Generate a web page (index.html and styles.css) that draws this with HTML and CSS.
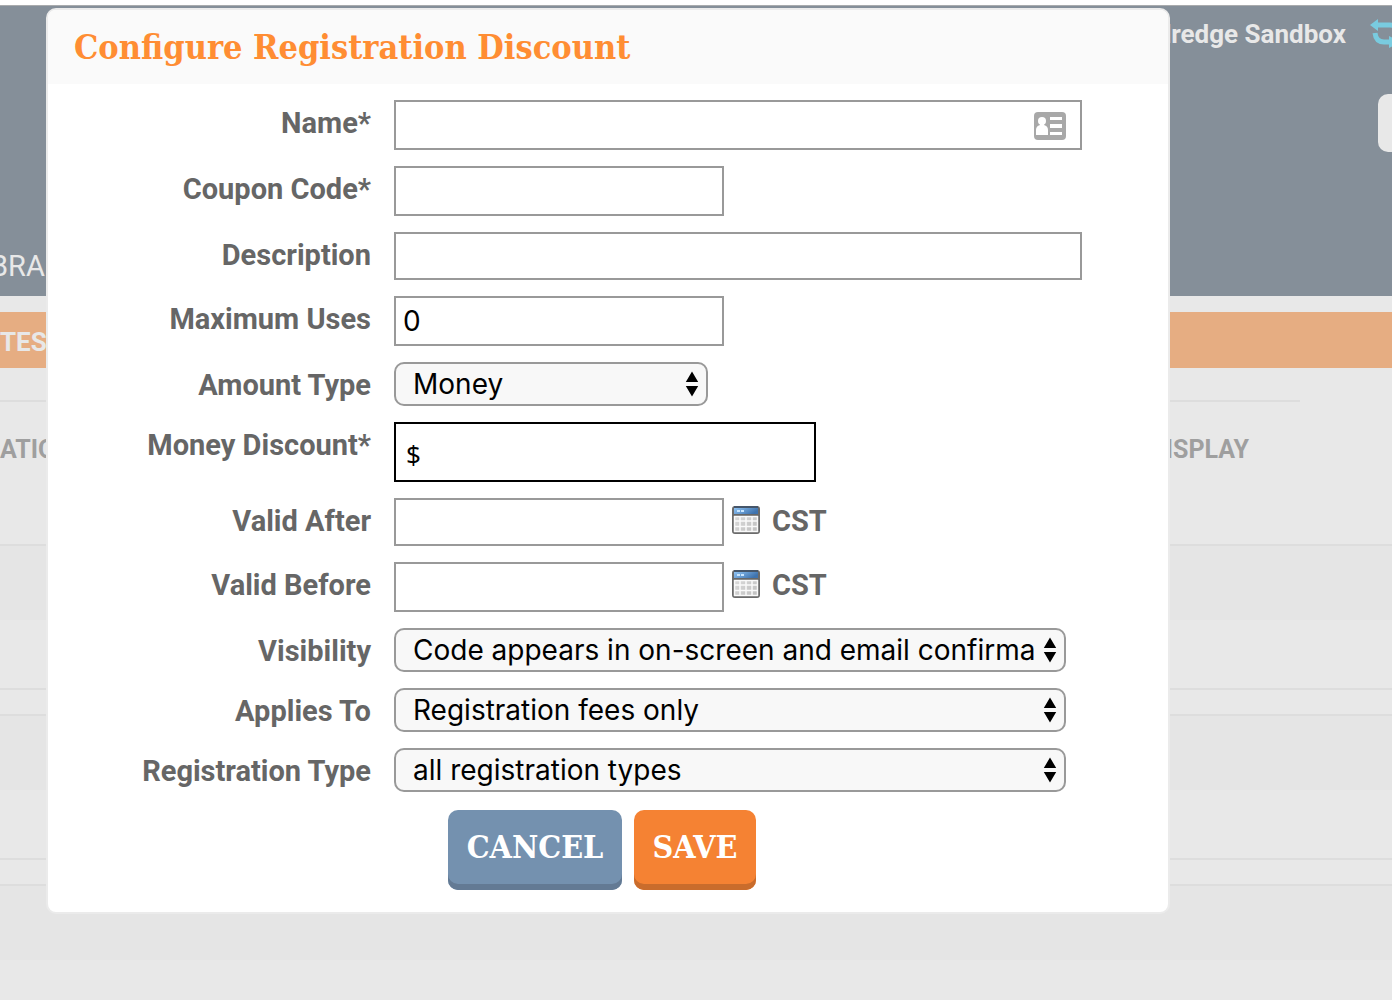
FILE: index.html
```html
<!DOCTYPE html>
<html lang="en">
<head>
<meta charset="utf-8">
<title>Configure Registration Discount</title>
<link rel="stylesheet" href="styles.css">
</head>
<body>
<svg class="defs" aria-hidden="true">
  <defs>
    <linearGradient id="cal-top" x1="0" x2="1" y1="0" y2="0.4">
      <stop offset="0" stop-color="#8fc4f5"/><stop offset="1" stop-color="#3f73ae"/>
    </linearGradient>
    <linearGradient id="cal-body" x1="0" x2="1" y1="0" y2="1">
      <stop offset="0" stop-color="#e2e2e2"/><stop offset="1" stop-color="#bdbdbd"/>
    </linearGradient>
    <symbol id="calendar" viewBox="0 0 28 28">
      <rect x="1" y="1" width="26" height="26" rx="2" fill="url(#cal-body)" stroke="#6b6b6b" stroke-width="2"/>
      <path d="M2 2h24v6H2z" fill="url(#cal-top)"/>
      <path d="M2 1h24" stroke="#46566a" stroke-width="2"/>
      <path d="M2 9h24" stroke="#686868" stroke-width="2"/>
      <path d="M5 4h3v2H5zM9 4h3v2H9z" fill="#c9e6ff"/>
      <path d="M2 10.5h24M2 15h24M2 20.5h24M2 25.5h24M2.5 10v16M8 10v16M14 10v16M20 10v16M25.500 10v16" stroke="#fff" stroke-width="1.500" opacity="0.9"/>
    </symbol>
    <symbol id="arrows" viewBox="0 0 14 26">
      <path d="M7 0.5L13.2 11H0.8zM7 25.5L13.2 15H0.8z" fill="#000"/>
    </symbol>
  </defs>
</svg>

<div class="page">
  <header class="site-header">
    <div class="account">
      <span class="account-name">dredge Sandbox</span>
      <svg class="refresh" viewBox="0 0 32 30" aria-hidden="true">
        <g fill="none" stroke="#79cbdf" stroke-width="5">
          <path d="M8 6h12q7 0 7 8v1"/>
          <path d="M5 14q1 9 9 9h11"/>
        </g>
        <path d="M0 6l8-6v12zM32 23l-13 6v-12z" fill="#79cbdf"/>
      </svg>
    </div>
    <div class="header-action"><button class="menu-button" type="button" aria-label="Menu"></button></div>
    <nav class="site-nav"><a href="#">BRAND</a></nav>
  </header>
  <div class="event-bar">TEST</div>
  <div class="tabs"><a href="#">ATION</a><a href="#">DISPLAY</a></div>
  <div class="band"></div>
  <div class="band-gap"></div>
  <div class="band"></div>
  <div class="band-gap"></div>
  <div class="band"></div>
</div>

<div class="dialog" role="dialog" aria-labelledby="dialog-title">
  <h1 class="dialog-title" id="dialog-title">Configure Registration Discount</h1>
  <form class="form">
    <div class="row">
      <label for="name">Name*</label>
      <div class="field wide">
        <input class="text tall" id="name" type="text">
        <svg class="contact" viewBox="0 0 32 28" aria-hidden="true">
          <rect width="32" height="28" rx="4" fill="#a8a8a8"/>
          <circle cx="8" cy="9" r="4" fill="#fff"/>
          <path d="M6 11h4v2q4 1 4 5v5H2v-5q0-4 4-5z" fill="#fff"/>
          <path d="M16 5h12v3H16zM16 12h12v4H16zM16 20h12v3H16z" fill="#fff"/>
        </svg>
      </div>
    </div>
    <div class="row">
      <label for="code">Coupon Code*</label>
      <div class="field short"><input class="text tall" id="code" type="text"></div>
    </div>
    <div class="row">
      <label for="desc">Description</label>
      <div class="field wide"><input class="text" id="desc" type="text"></div>
    </div>
    <div class="row">
      <label for="uses">Maximum Uses</label>
      <div class="field short"><input class="text tall" id="uses" type="text" value="0"></div>
    </div>
    <div class="row">
      <label for="amount">Amount Type</label>
      <div class="field select-short">
        <select id="amount"><option>Money</option></select>
        <svg class="arrows" aria-hidden="true"><use href="#arrows"/></svg>
      </div>
    </div>
    <div class="row">
      <label for="money">Money Discount*</label>
      <div class="field money"><input class="text active" id="money" type="text" value="$"></div>
    </div>
    <div class="row">
      <label for="after">Valid After</label>
      <div class="field short"><input class="text" id="after" type="text"></div>
      <svg class="calendar" aria-hidden="true"><use href="#calendar"/></svg>
      <span class="zone">CST</span>
    </div>
    <div class="row">
      <label for="before">Valid Before</label>
      <div class="field short"><input class="text tall" id="before" type="text"></div>
      <svg class="calendar" aria-hidden="true"><use href="#calendar"/></svg>
      <span class="zone">CST</span>
    </div>
    <div class="row">
      <label for="visibility">Visibility</label>
      <div class="field select-wide">
        <select id="visibility"><option>Code appears in on-screen and email confirmations</option></select>
        <svg class="arrows" aria-hidden="true"><use href="#arrows"/></svg>
      </div>
    </div>
    <div class="row">
      <label for="applies">Applies To</label>
      <div class="field select-wide">
        <select id="applies"><option>Registration fees only</option></select>
        <svg class="arrows" aria-hidden="true"><use href="#arrows"/></svg>
      </div>
    </div>
    <div class="row">
      <label for="type">Registration Type</label>
      <div class="field select-wide">
        <select id="type"><option>all registration types</option></select>
        <svg class="arrows" aria-hidden="true"><use href="#arrows"/></svg>
      </div>
    </div>
    <div class="actions">
      <button class="button cancel" type="button">CANCEL</button>
      <button class="button save" type="submit">SAVE</button>
    </div>
  </form>
</div>
</body>
</html>
```

FILE: styles.css
```css
* {
  box-sizing: border-box;
}

body {
  margin: 0;
  position: relative;
  background: #e8e8e8;
  color: #666;
  font-family: Roboto, "Liberation Sans", sans-serif;
}

.defs {
  position: absolute;
  width: 0;
  height: 0;
}

/* Dimmed page behind the dialog */
.page {
  min-height: 100vh;
  overflow: hidden;
  border-top: 5px solid #fff;
}

.page a {
  color: inherit;
  text-decoration: none;
}

.site-header {
  height: 291px;
  display: flex;
  flex-direction: column;
  border-top: 1px solid #a9abad;
  background: #858f99;
  color: #e8e8e8;
}

.account {
  display: flex;
  justify-content: flex-end;
  align-items: center;
  gap: 24px;
  height: 56px;
  margin-right: -10px;
}

.account-name {
  font-size: 26px;
  font-weight: 700;
}

.refresh {
  width: 32px;
  height: 30px;
}

.header-action {
  display: flex;
  justify-content: flex-end;
  padding-top: 32px;
}

.menu-button {
  width: 30px;
  height: 58px;
  margin-right: -16px;
  border: 0;
  border-radius: 10px;
  background: #e8e8e8;
}

.site-nav {
  margin: auto 0 12px -10px;
  font-size: 29px;
  line-height: 36px;
}

.event-bar {
  height: 56px;
  margin-top: 16px;
  background: #e6ad82;
  color: #e8e8e8;
  font-size: 26px;
  font-weight: 700;
  line-height: 60px;
}

.tabs {
  display: flex;
  justify-content: space-between;
  height: 144px;
  margin: 32px 92px 0 0;
  padding-right: 51px;
  border-top: 2px solid #ddd;
  color: #9f9f9f;
  font-size: 25px;
  font-weight: 700;
  line-height: 96px;
}

.band {
  height: 146px;
  border: solid #ddd;
  border-width: 2px 0;
  background: linear-gradient(#e5e5e5 74px, #e8e8e8 74px);
}

.band-gap {
  height: 24px;
}

/* Dialog */
.dialog {
  position: absolute;
  top: 8px;
  left: 46px;
  right: 222px;
  overflow: hidden;
  border: 2px solid #ebebeb;
  border-radius: 10px;
  background: #fff;
}

.dialog-title {
  margin: 0;
  padding: 0 26px;
  background: #fafafa;
  color: #ff8d33;
  font-family: "DejaVu Serif Condensed", "DejaVu Serif", serif;
  font-size: 34px;
  font-weight: 700;
  line-height: 74px;
}

.form {
  display: flex;
  flex-direction: column;
  gap: 16px;
  padding: 16px 24px 22px 0;
}

.row {
  display: flex;
  align-items: flex-start;
}

.row label {
  flex: none;
  width: 323px;
  margin-right: 23px;
  text-align: right;
}

.row label,
.zone {
  height: 44px;
  font-size: 29px;
  font-weight: 700;
  line-height: 46px;
}

.field {
  position: relative;
  display: flex;
}

.wide {
  width: 688px;
}

.short {
  width: 330px;
}

.money {
  width: 422px;
}

.select-short {
  width: 314px;
}

.select-wide {
  width: 672px;
}

.text {
  width: 100%;
  height: 48px;
  padding: 0 7px;
  border: 2px solid #999;
  border-radius: 0;
  background: #fff;
  color: #000;
  font-family: Inter, sans-serif;
  font-size: 28px;
  outline: 0;
}

.tall {
  height: 50px;
}

.active {
  height: 60px;
  padding: 4px 10px 0;
  border-color: #000;
  font-family: "Noto Sans", sans-serif;
  font-size: 26px;
}

select {
  width: 100%;
  height: 44px;
  padding: 0 30px 0 17px;
  appearance: none;
  border: 2px solid #999;
  border-radius: 10px;
  background: #f8f8f8;
  color: #000;
  font-family: Inter, sans-serif;
  font-size: 28px;
}

.arrows {
  position: absolute;
  top: 9px;
  right: 9px;
  width: 14px;
  height: 26px;
  pointer-events: none;
}

.contact {
  position: absolute;
  top: 12px;
  right: 16px;
  width: 32px;
  height: 28px;
}

.calendar {
  width: 28px;
  height: 28px;
  margin: 8px 12px 0 8px;
}

.actions {
  display: flex;
  gap: 12px;
  margin: 2px 0 0 400px;
}

.button {
  height: 80px;
  padding: 0 18px 6px;
  border: 0;
  border-radius: 10px;
  color: #fff;
  font-family: "DejaVu Serif Condensed", "DejaVu Serif", serif;
  font-size: 32px;
  font-weight: 700;
}

.cancel {
  width: 174px;
  background: #7491af;
  box-shadow: inset 0 -6px #637a94;
}

.save {
  width: 122px;
  background: #f58233;
  box-shadow: inset 0 -6px #c96c2c;
}
```
